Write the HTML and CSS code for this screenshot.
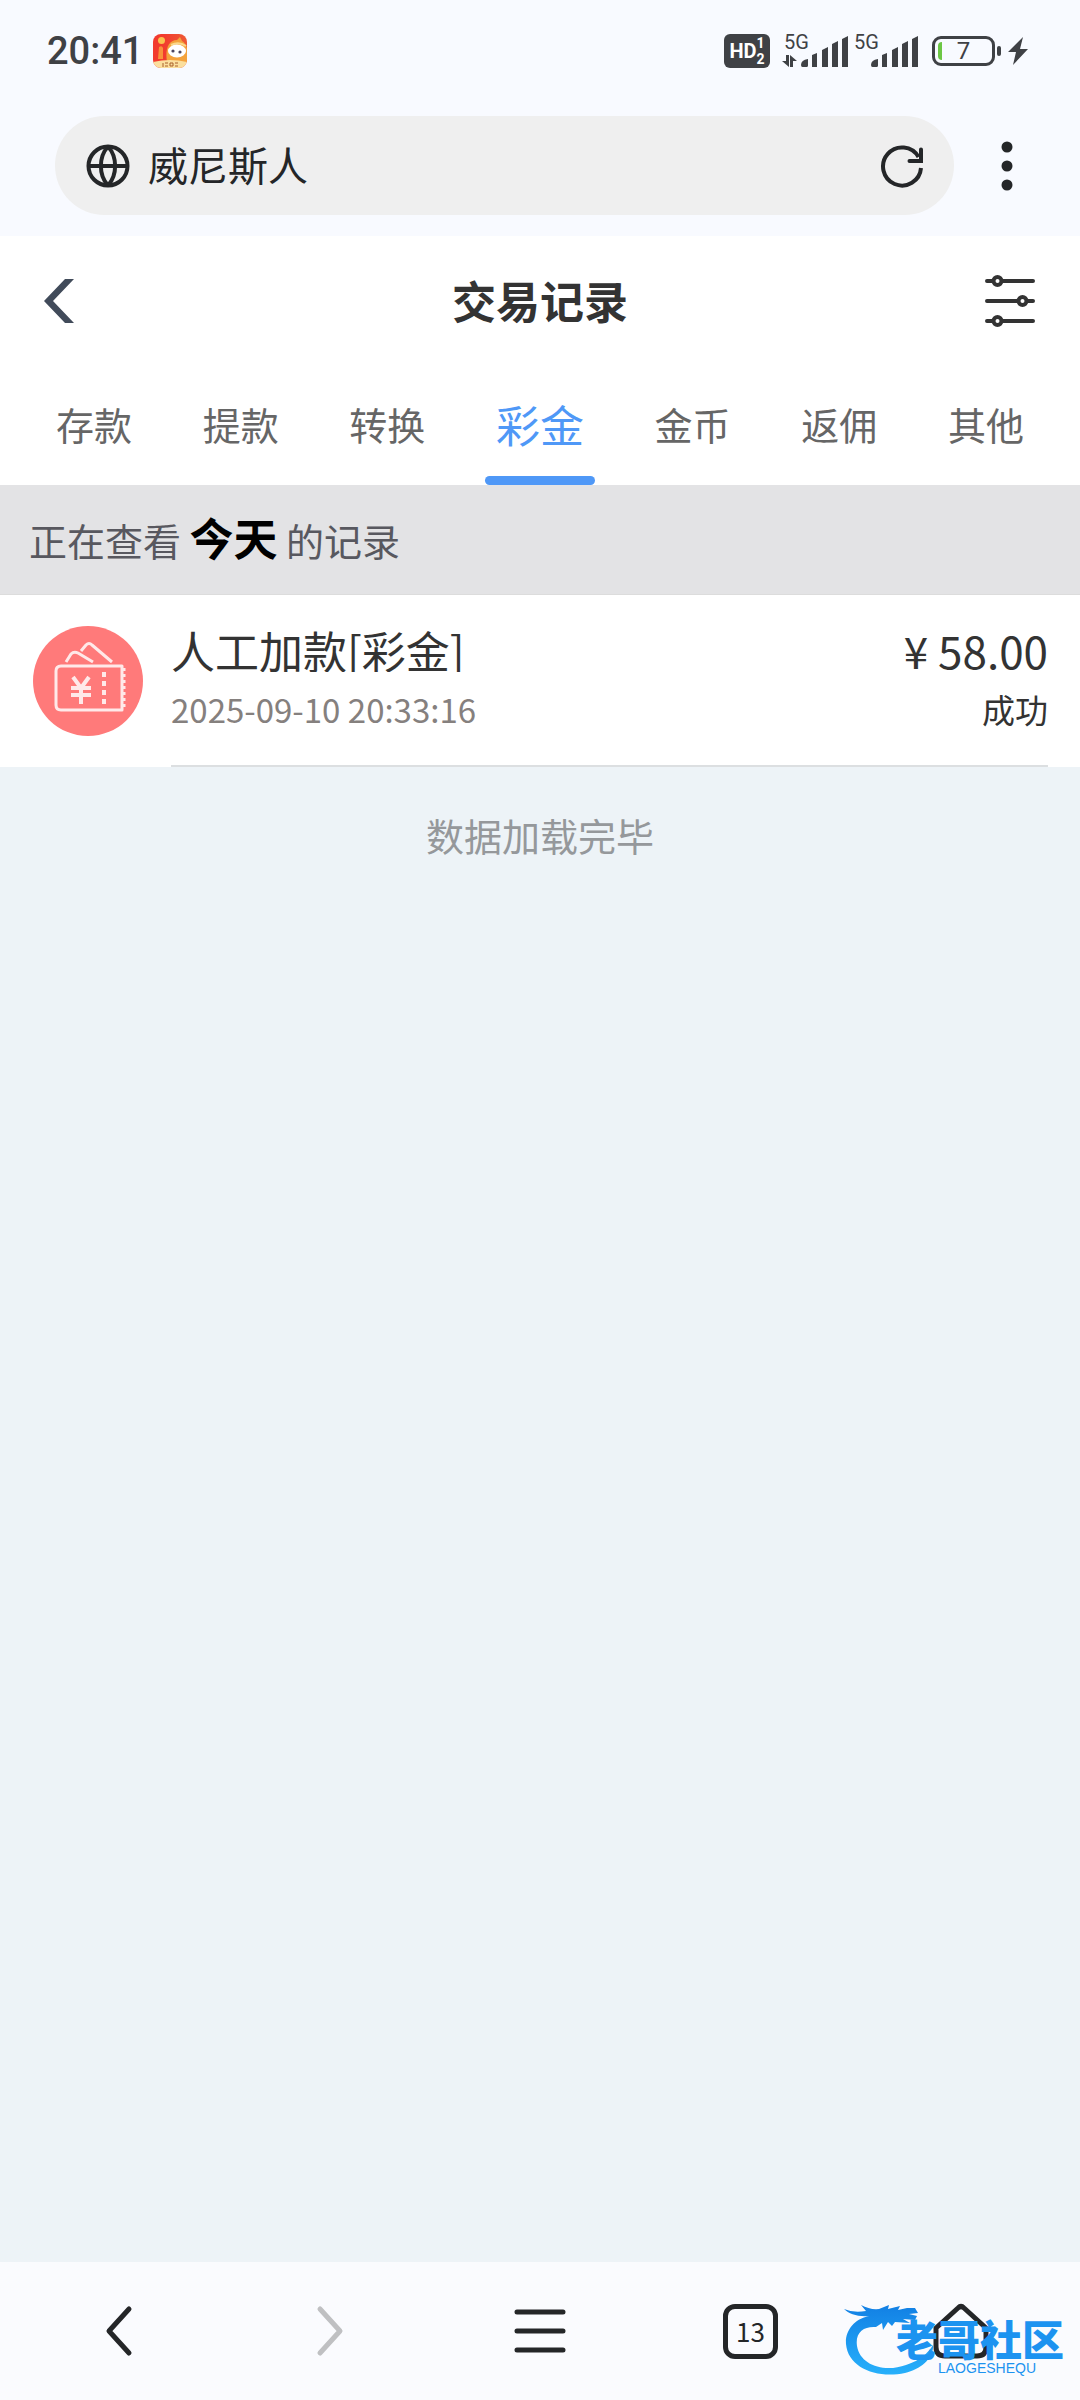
FILE: index.html
```html
<!DOCTYPE html>
<html lang="zh-CN">
<head>
    <meta charset="UTF-8">
    <meta name="viewport" content="width=device-width, initial-scale=1.0">
    <title>交易记录</title>
    <link rel="stylesheet" href="styles.css">
</head>
<body>
    <div class="browser-top">
        <div class="status-bar">
            <div class="status-left">
                <span class="clock">20:41</span>
                <svg class="app-icon" width="34" height="34" viewBox="0 0 34 34">
                    <defs>
                        <linearGradient id="app-bg" x1="0" y1="0" x2="1" y2="0">
                            <stop offset="0.3" stop-color="#f23a2e"/>
                            <stop offset="1" stop-color="#ee5a35"/>
                        </linearGradient>
                        <clipPath id="app-clip"><rect width="34" height="34" rx="8"/></clipPath>
                    </defs>
                    <g clip-path="url(#app-clip)">
                        <rect width="34" height="34" fill="url(#app-bg)"/>
                        <path d="M14 28C12 16 15 6 24 6l3-3 2 4c5 3 6 8 6 21z" fill="#f4a23c"/>
                        <circle cx="8.500" cy="6.500" r="3.500" fill="#fbc04e"/>
                        <path d="M6 13q3-2 4 1v11H5z" fill="#f8913a"/>
                        <path d="M18 11q8-4 15 1" fill="none" stroke="#fbd98b" stroke-width="2"/>
                        <ellipse cx="24" cy="17" rx="9" ry="6.500" fill="#fff"/>
                        <circle cx="20" cy="17" r="1.600" fill="#4b4560"/>
                        <circle cx="27" cy="18" r="1.600" fill="#4b4560"/>
                        <path d="M0 28q17-4 34 0v6H0z" fill="#fbdf9e"/>
                        <path d="M10 29v4M12 29h3M12 32h3M17 29h3v3h-3zM22 29h3M22 32h3" fill="none" stroke="#a8612c" stroke-width="1"/>
                    </g>
                </svg>
            </div>
            <div class="status-right">
                <span class="hd-badge"><span>HD</span><span class="hd-sims"><i>1</i><i>2</i></span></span>
                <span class="signal">
                    <span class="signal-label">5G</span>
                    <svg width="66" height="34" viewBox="0 0 66 34">
                        <path d="M0 27h4v-6h3v12zM15 27h-4v6H8V21z"/>
                        <path d="M19 31q0-5 7-6v6.500q0 1.500-1.500 1.500h-4q-1.500 0-1.500-2zM30 21l5-2v14h-5zM40 16l6-3v20h-6zM50 10l6-3v26h-6zM60 5l6-3v31h-6z"/>
                    </svg>
                </span>
                <span class="signal">
                    <span class="signal-label">5G</span>
                    <svg width="66" height="34" viewBox="0 0 66 34">
                        <path d="M19 31q0-5 7-6v6.500q0 1.500-1.500 1.500h-4q-1.500 0-1.500-2zM30 21l5-2v14h-5zM40 16l6-3v20h-6zM50 10l6-3v26h-6zM60 5l6-3v31h-6z"/>
                    </svg>
                </span>
                <span class="battery"><span class="battery-level"></span>7</span>
                <svg class="bolt" width="20" height="28" viewBox="0 0 20 28"><path d="M15 0L0 15h8L5 28 20 12h-8z"/></svg>
            </div>
        </div>

        <div class="address-row">
            <div class="address-bar">
                <svg width="44" height="44" viewBox="0 0 44 44" class="line-icon">
                    <circle cx="22" cy="22" r="19.500"/>
                    <path d="M2.500 22h39M22 2.500C12.500 13 12.500 31 22 41.500M22 2.500c9.500 10.500 9.500 28.500 0 39"/>
                </svg>
                <input class="address-input" type="text" value="威尼斯人" aria-label="网址">
                <button class="icon-button" aria-label="刷新">
                    <svg width="44" height="44" viewBox="0 0 44 44" class="line-icon">
                        <path d="M42 24A19 19 0 1 1 39.500 13"/>
                        <path d="M42 5.500v11.500H30.500" stroke-linecap="round"/>
                    </svg>
                </button>
            </div>
            <button class="more-button" aria-label="更多">
                <svg width="12" height="50" viewBox="0 0 12 50">
                    <circle cx="6" cy="6" r="5.500"/>
                    <circle cx="6" cy="25" r="5.500"/>
                    <circle cx="6" cy="44" r="5.500"/>
                </svg>
            </button>
        </div>
    </div>

    <header class="header">
        <button class="icon-button" aria-label="返回">
            <svg width="30" height="44" viewBox="0 0 30 44"><path d="M21 0h9L9 22l21 22h-9L0 22z" fill="#414b5a"/></svg>
        </button>
        <h1>交易记录</h1>
        <button class="icon-button" aria-label="筛选">
            <svg width="52" height="52" viewBox="0 0 52 52" class="filter-icon">
                <path d="M3 6h46M3 26h46M3 46h46"/>
                <circle cx="13.500" cy="6" r="4"/>
                <circle cx="38.500" cy="26" r="4"/>
                <circle cx="13.500" cy="46" r="4"/>
            </svg>
        </button>
    </header>

    <nav class="tabs">
        <button class="tab">存款</button>
        <button class="tab">提款</button>
        <button class="tab">转换</button>
        <button class="tab active">彩金</button>
        <button class="tab">金币</button>
        <button class="tab">返佣</button>
        <button class="tab">其他</button>
    </nav>

    <main class="records">
        <p class="records-range">正在查看 <strong>今天</strong> 的记录</p>

        <div class="record">
            <svg class="record-icon" width="110" height="110" viewBox="0 0 110 110">
                <circle cx="55" cy="55" r="55" fill="#ff7a7a"/>
                <g fill="none" stroke="#ffe9e9" stroke-width="3" stroke-linejoin="round">
                    <path d="M89 40H28q-5 0-5 5v34q0 5 5 5h61z"/>
                    <path d="M33 36l5-8q3-3 7-1l15 9M48 25l5-6q3-3 6 0l20 17"/>
                    <path d="M91 42v42" stroke-dasharray="3 3"/>
                    <path d="M71 46v34" stroke-dasharray="5 4" stroke-width="4"/>
                    <path d="M40 51l8 11 8-11M38 62h20M38 69h20M48 62v16" stroke-width="4"/>
                </g>
            </svg>
            <div class="record-body">
                <div class="record-info">
                    <h2>人工加款[彩金]</h2>
                    <time datetime="2025-09-10T20:33:16">2025-09-10 20:33:16</time>
                </div>
                <div class="record-result">
                    <span class="record-amount">¥ 58.00</span>
                    <span class="record-status">成功</span>
                </div>
            </div>
        </div>

        <p class="records-end">数据加载完毕</p>
    </main>

    <nav class="bottom-nav">
        <button class="nav-button" aria-label="后退">
            <svg width="56" height="56" viewBox="0 0 56 56"><path d="M38 6L18 28l20 22"/></svg>
        </button>
        <button class="nav-button" aria-label="前进" disabled>
            <svg width="56" height="56" viewBox="0 0 56 56"><path d="M18 6l20 22-20 22"/></svg>
        </button>
        <button class="nav-button" aria-label="菜单">
            <svg width="56" height="56" viewBox="0 0 56 56"><path d="M5 9h46M5 28h46M5 47h46"/></svg>
        </button>
        <button class="nav-button" aria-label="标签页"><span class="tab-count">13</span></button>
        <button class="nav-button" aria-label="主页">
            <svg width="56" height="56" viewBox="0 0 56 56"><path d="M3 25L25 5q3-3 6 0l22 20v19q0 9-9 9H12q-9 0-9-9z"/></svg>
        </button>

        <div class="watermark">
            <svg width="96" height="76" viewBox="0 0 96 76">
                <defs>
                    <linearGradient id="dragon" x1="0" y1="0" x2="0" y2="1">
                        <stop offset="0" stop-color="#1280e4"/>
                        <stop offset="1" stop-color="#27b0fb"/>
                    </linearGradient>
                </defs>
                <path fill="url(#dragon)" d="M0 9q9 4 22 2l-5-6q9 5 18 4l10-4-1 4 12-3-2 4 9-2 8 0 3 5-9 1 8 2-2 4-12-1 7 4-15-1-3 4-4-4-5 8-1-7-6 4C20 26 11 32 13 46c3 19 27 27 49 19 15-5 22-12 27-20 1 13-12 24-28 28C33 79 4 68 2 44 1 31 10 19 25 16 14 17 5 14 0 9z"/>
            </svg>
            <div class="watermark-text">
                <span class="watermark-name">老哥社区</span>
                <span class="watermark-latin">LAOGESHEQU</span>
            </div>
        </div>
    </nav>
</body>
</html>
```

FILE: styles.css
```css
:root {
    --chrome: #f8faff;
    --status: #3f4145;
    --ink: #242628;
    --text-dark: #333333;
    --text-tab: #666666;
    --text-range: #58585f;
    --text-light: #85807e;
    --blue: #4f98f7;
    --page: #edf3f7;
    --range-bg: #e3e3e5;
}

* {
    box-sizing: border-box;
    margin: 0;
    padding: 0;
}

body {
    min-height: 100vh;
    display: flex;
    flex-direction: column;
    background-color: var(--page);
    color: var(--text-dark);
    font-family: "Noto Sans CJK SC", sans-serif;
}

button,
input {
    background: none;
    border: none;
    font-family: inherit;
    color: inherit;
}

button {
    cursor: pointer;
}

svg {
    display: block;
    flex-shrink: 0;
}

.icon-button {
    display: flex;
}

/* Status bar and address bar */
.browser-top {
    background-color: var(--chrome);
    padding-bottom: 21px;
}

.status-bar {
    height: 102px;
    padding: 0 52px 0 47px;
    display: flex;
    align-items: center;
    justify-content: space-between;
    color: var(--status);
    fill: var(--status);
    font-family: Roboto, sans-serif;
}

.status-left,
.status-right {
    display: flex;
    align-items: center;
}

.status-left {
    gap: 10px;
}

.clock {
    font-size: 38px;
    font-weight: 500;
    line-height: 44px;
}

.hd-badge {
    height: 34px;
    width: 46px;
    margin-right: 12px;
    border-radius: 6px;
    background-color: var(--status);
    color: #ffffff;
    font-size: 20px;
    font-weight: 700;
    display: flex;
    align-items: center;
    justify-content: center;
}

.hd-sims {
    display: flex;
    flex-direction: column;
    font-size: 14px;
    line-height: 16px;
}

.hd-sims i {
    font-style: normal;
}

.signal {
    position: relative;
    margin-right: 4px;
}

.signal-label {
    position: absolute;
    top: -2px;
    left: 2px;
    font-size: 20px;
    line-height: 20px;
}

.battery {
    position: relative;
    width: 63px;
    height: 30px;
    margin: 0 13px 0 10px;
    border: 3px solid var(--status);
    border-radius: 9px;
    font-size: 24px;
    line-height: 24px;
    text-align: center;
}

.battery::after {
    content: "";
    position: absolute;
    top: 7px;
    right: -9px;
    width: 4px;
    height: 10px;
    border-radius: 2px;
    background-color: var(--status);
}

.battery-level {
    position: absolute;
    top: 3px;
    left: 3px;
    width: 4px;
    height: 18px;
    border-radius: 4px 0 0 4px;
    background-color: #6cc644;
}

.address-row {
    display: flex;
    padding: 14px 20px 0 55px;
}

.address-bar {
    flex: 1;
    min-width: 0;
    height: 99px;
    padding: 0 31px;
    border-radius: 50px;
    background-color: #efefef;
    display: flex;
    align-items: center;
    gap: 18px;
}

.line-icon {
    fill: none;
    stroke: var(--ink);
    stroke-width: 4;
}

.address-input {
    flex: 1;
    min-width: 0;
    height: 60px;
    padding-bottom: 4px;
    color: var(--ink);
    font-size: 40px;
}

.more-button {
    width: 106px;
    display: flex;
    align-items: center;
    justify-content: center;
    fill: var(--ink);
}

/* Page header */
.header {
    height: 130px;
    padding: 0 44px;
    background-color: #ffffff;
    display: grid;
    grid-template-columns: 1fr auto 1fr;
    align-items: center;
}

.header h1 {
    padding-bottom: 2px;
    font-size: 44px;
    font-weight: 700;
    line-height: 64px;
}

.header .icon-button:last-child {
    justify-self: end;
}

.filter-icon {
    fill: #ffffff;
    stroke: var(--text-dark);
    stroke-width: 4;
    stroke-linecap: round;
}

.tabs {
    height: 119px;
    padding: 0 56px;
    background-color: #ffffff;
    display: flex;
    justify-content: space-between;
}

.tab {
    position: relative;
    padding-bottom: 4px;
    color: var(--text-tab);
    font-size: 38px;
}

.tab.active {
    color: var(--blue);
    font-size: 44px;
}

.tab.active::after {
    content: "";
    position: absolute;
    left: -11px;
    right: -11px;
    bottom: 0;
    height: 9px;
    border-radius: 5px;
    background-color: var(--blue);
}

/* Records */
.records {
    flex: 1;
}

.records-range {
    height: 110px;
    padding: 0 29px;
    border-bottom: 1px solid #dcdcdc;
    background-color: var(--range-bg);
    color: var(--text-range);
    font-size: 38px;
    line-height: 104px;
}

.records-range strong {
    color: #000000;
    font-size: 44px;
}

.record {
    padding: 0 32px 0 33px;
    background-color: #ffffff;
    display: flex;
    align-items: center;
    gap: 28px;
}

.record-body {
    flex: 1;
    height: 172px;
    padding-top: 33px;
    border-bottom: 2px solid #dcdfe1;
    display: flex;
    justify-content: space-between;
}

.record-info,
.record-result {
    display: flex;
    flex-direction: column;
    gap: 15px;
}

.record-result {
    align-items: flex-end;
}

.record-info h2,
.record-amount {
    font-size: 44px;
    font-weight: 400;
    line-height: 44px;
}

/* the title box is one em high and cuts the bracket feet */
.record-info h2 {
    overflow: hidden;
}

.record-info time,
.record-status {
    font-size: 33px;
    line-height: 44px;
}

.record-info time {
    color: var(--text-light);
}

.records-end {
    padding-top: 40px;
    color: #95989b;
    font-size: 38px;
    line-height: 56px;
    text-align: center;
}

/* Browser toolbar */
.bottom-nav {
    position: relative;
    height: 138px;
    padding: 0 14px;
    background-color: #fafbfe;
    display: flex;
}

.nav-button {
    flex: 1;
    display: flex;
    align-items: center;
    justify-content: center;
    fill: none;
    stroke: var(--ink);
    stroke-width: 5;
    stroke-linecap: round;
    stroke-linejoin: round;
}

.nav-button:disabled {
    stroke: #bfc0c2;
}

.tab-count {
    width: 55px;
    height: 55px;
    border: 5px solid var(--ink);
    border-radius: 12px;
    color: var(--ink);
    font-size: 26px;
    line-height: 43px;
}

.watermark {
    position: absolute;
    right: 16px;
    bottom: 24px;
    display: flex;
    color: #1c93f0;
}

.watermark-text {
    margin: 16px 0 0 -44px;
    display: flex;
    flex-direction: column;
}

.watermark-name {
    font-size: 42px;
    font-weight: 900;
    line-height: 44px;
}

.watermark-latin {
    margin-left: 42px;
    font-family: "Liberation Sans", sans-serif;
    font-size: 14px;
    line-height: 16px;
}
```
